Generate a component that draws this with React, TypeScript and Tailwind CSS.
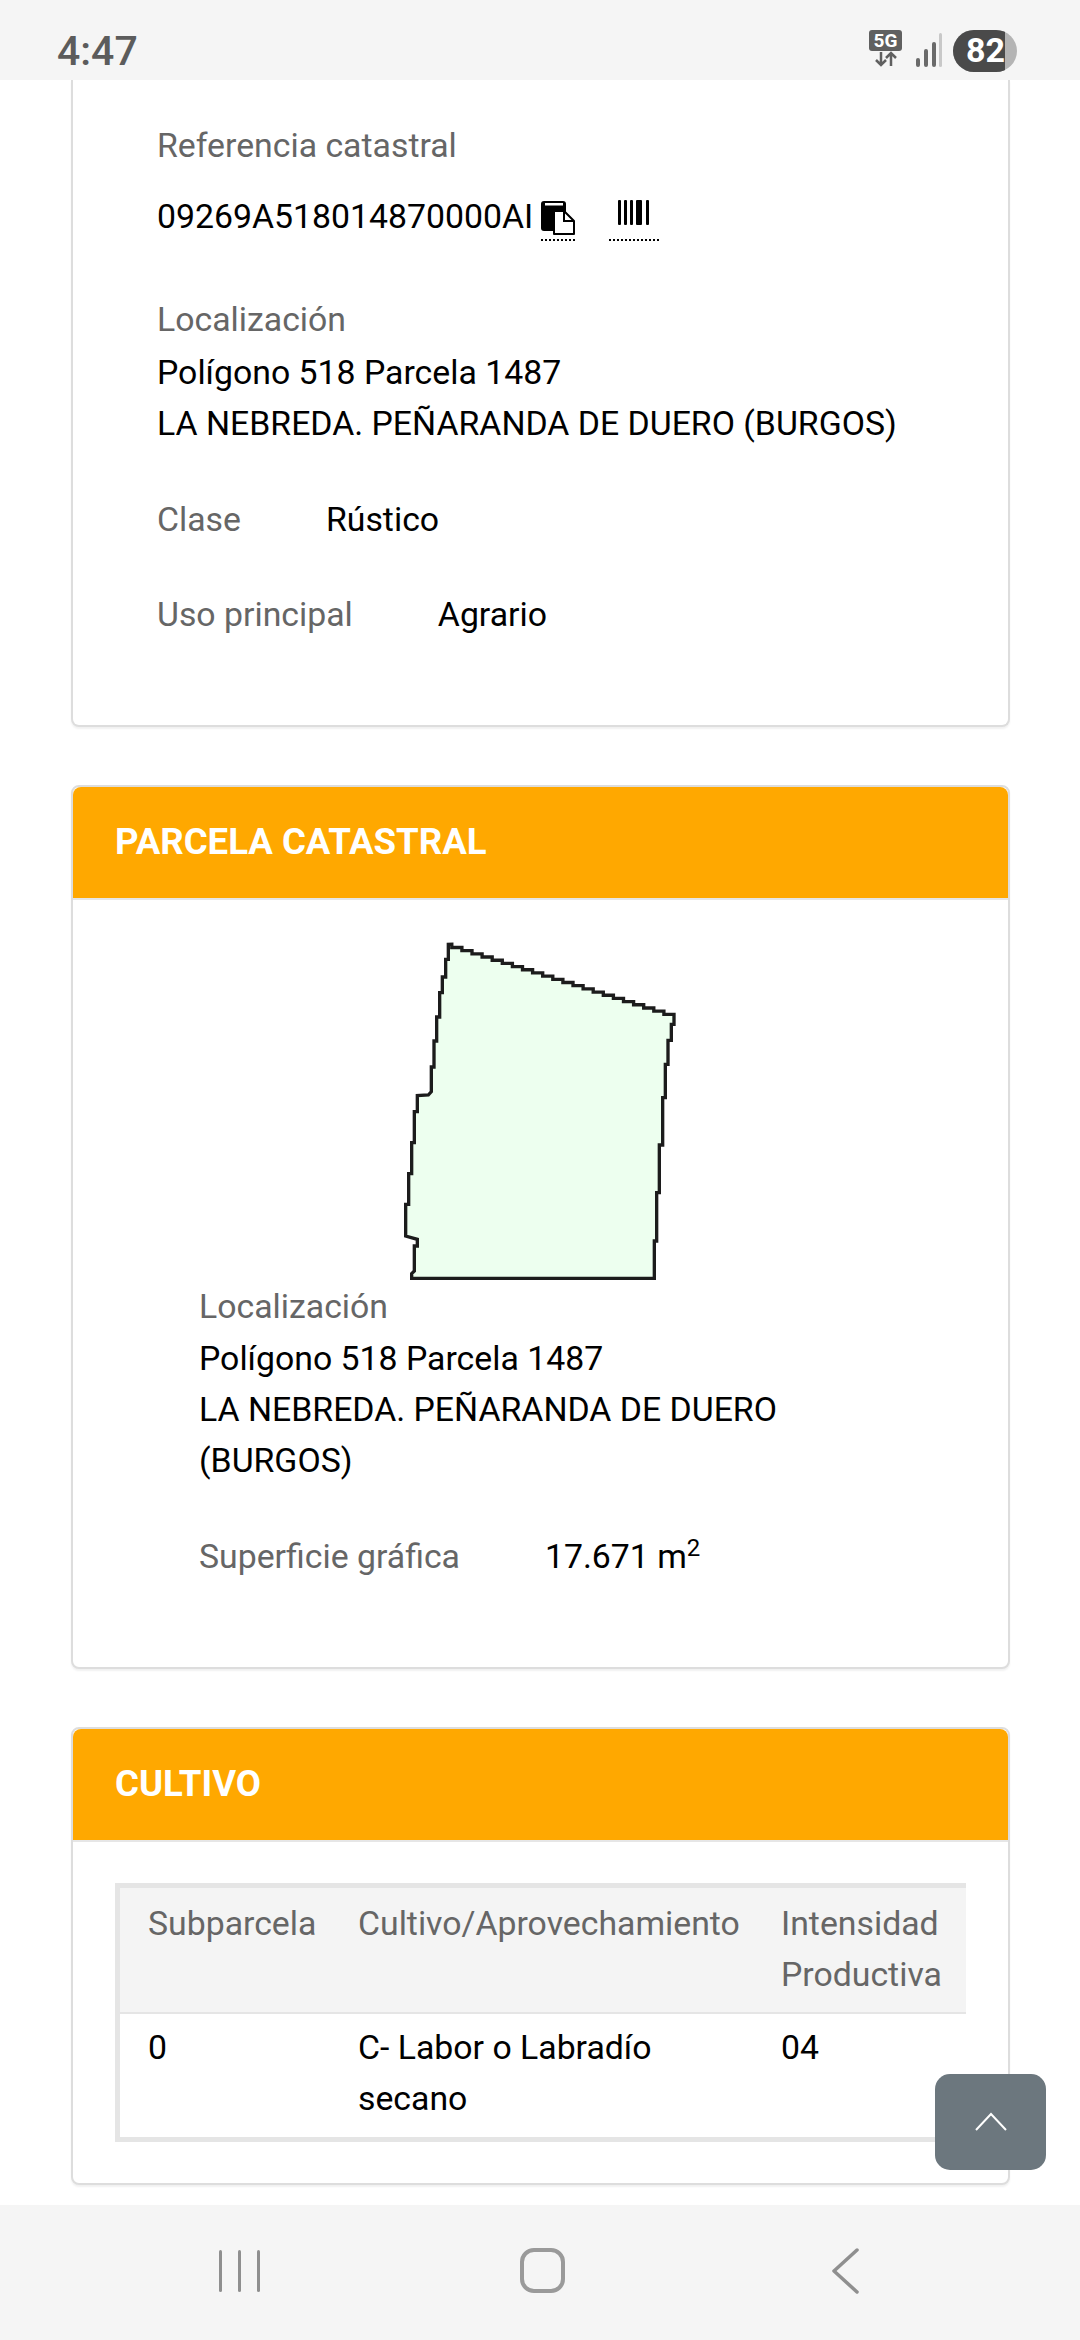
import type { ReactNode } from 'react';

const leftAndBottom =
  '205,70 205,115 197,115 197,168 187,168 187,215 179,215 179,288 170,288 170,360 162,360 162,438 154,438 154,512 145,522 112,524 112,572 103,572 103,665 95,665 95,758 86,758 86,850 77,850 77,945 112,955 112,975 103,975 103,1050 95,1058 95,1072 823,1072 823,960 830,960 830,815 838,815 838,672 848,672 848,530 856,530 856,430 864,430 864,358 874,358 874,310 882,310 882,280';

// top edge of the parcel is a staircase from the right corner back to the start
const topEdge = Array.from({ length: 22 }, (_, i) => {
  const x = 882 - (i + 1) * 30.3;
  const y = 280 - i * 9.55;
  return `${x},${y} ${x},${y - 9.55}`;
}).join(' ');

function CardHeader({ title }: { title: string }) {
  return (
    <div className="flex h-[113px] items-center rounded-t-lg border-b-2 border-[#e6e6e6] bg-[#ffa800] pb-[3px] pl-[42px] text-[36.6px] font-bold text-white">
      {title}
    </div>
  );
}

function Card({ children, className }: { children: ReactNode; className: string }) {
  return (
    <div className={`ml-[71px] w-[939px] border-2 border-[#dddddd] bg-white shadow-[0_2px_2px_rgba(0,0,0,0.06)] ${className}`}>
      {children}
    </div>
  );
}

function Row({ label, value, className }: { label: string; value: ReactNode; className: string }) {
  return (
    <div className={`flex gap-[85px] ${className}`}>
      <span className="text-[#666666]">{label}</span>
      <span className="text-black">{value}</span>
    </div>
  );
}

function CopyIcon() {
  return (
    <svg width="34" height="34" viewBox="0 0 34 34">
      <path d="M3 0h19a3 3 0 0 1 3 3v27H3a3 3 0 0 1-3-3V3a3 3 0 0 1 3-3z" fill="#000" />
      <rect x="4" y="2" width="18" height="2.5" fill="#fff" />
      <path d="M13 33V10h10l10 10v13z" fill="#fff" stroke="#000" strokeWidth="2" strokeLinejoin="round" />
      <path d="M23 10v10h10" fill="none" stroke="#000" strokeWidth="2" />
    </svg>
  );
}

function BarcodeIcon() {
  return (
    <svg width="34" height="26" viewBox="0 0 34 26" fill="#000">
      <rect x="1" y="0" width="3" height="25" rx="1" />
      <rect x="7" y="0" width="3" height="25" rx="1" />
      <rect x="13" y="0" width="3" height="25" rx="1" />
      <rect x="19" y="0" width="6" height="25" rx="1" />
      <rect x="29" y="0" width="3" height="25" rx="1" />
    </svg>
  );
}

function StatusBar() {
  return (
    <div className="flex h-[80px] shrink-0 items-start justify-between bg-[#f5f5f5] pr-[63px] pl-[57px]">
      <span className="mt-[27px] text-[41px] leading-[48px] font-medium text-[#5c5c5c]">4:47</span>
      <div className="mt-[30px] flex items-start">
        <div className="flex w-[33px] flex-col items-center">
          <span className="flex h-[21px] w-[33px] items-center justify-center rounded-[3px] bg-[#606060] text-[19px] leading-none font-bold text-white">
            5G
          </span>
          <svg width="26" height="16" viewBox="0 0 26 16" fill="none" stroke="#606060" strokeWidth="2.5">
            <path d="M8 1v13M3 9l5 5 5-5" />
            <path d="M18 15V2M13 7l5-5 5 5" />
          </svg>
        </div>
        <svg className="mt-[2px] ml-[13px]" width="27" height="36" viewBox="0 0 27 36">
          <rect x="1" y="26" width="4" height="9" rx="2" fill="#6a6a6a" />
          <rect x="9" y="17" width="4" height="18" rx="2" fill="#6a6a6a" />
          <rect x="17" y="10" width="4" height="25" rx="2" fill="#6a6a6a" />
          <rect x="24" y="1" width="3" height="34" rx="1.5" fill="#c8c8c8" />
        </svg>
        <div className="ml-[11px] flex h-[42px] w-[64px] overflow-hidden rounded-full bg-[#b4b4b4]">
          <span className="flex w-[52px] items-center justify-end bg-[#4a4a4a] pb-[2px] text-[34px] leading-none font-bold text-white">
            82
          </span>
        </div>
      </div>
    </div>
  );
}

function NavBar() {
  return (
    <div className="flex h-[135px] shrink-0 items-start bg-[#f5f5f5] pt-[43px] pl-[219px]">
      <div className="mt-[2px] flex h-[42px] w-[41px] justify-between">
        <span className="w-[3px] rounded-full bg-[#8f8f8f]" />
        <span className="w-[3px] rounded-full bg-[#8f8f8f]" />
        <span className="w-[3px] rounded-full bg-[#8f8f8f]" />
      </div>
      <div className="ml-[260px] h-[45px] w-[45px] rounded-[14px] border-[4px] border-[#9a9a9a]" />
      <svg className="ml-[266px]" width="28" height="46" viewBox="0 0 28 46" fill="none" stroke="#8f8f8f" strokeWidth="3.5" strokeLinecap="round" strokeLinejoin="round">
        <path d="M26 2 3 23l23 21" />
      </svg>
    </div>
  );
}

export default function App() {
  return (
    <div className="relative flex h-[2340px] w-[1080px] flex-col overflow-hidden bg-white font-['Roboto',sans-serif] text-[33.8px] leading-[51px]">
      <StatusBar />
      <div className="min-h-0 flex-1 overflow-hidden">
        <Card className="h-[647px] rounded-b-lg border-t-0 pt-[40px] pl-[84px]">
          <div className="text-[#666666]">Referencia catastral</div>
          <div className="mt-[20px] flex items-start text-black">
            <span>09269A518014870000AI</span>
            <span className="mt-[10px] ml-[8px] border-b-2 border-dotted border-black pb-[4px]">
              <CopyIcon />
            </span>
            <span className="mt-[9px] ml-[34px] border-b-2 border-dotted border-black px-[8px] pb-[13px]">
              <BarcodeIcon />
            </span>
          </div>
          <div className="mt-[52px] text-[#666666]">Localización</div>
          <div className="mt-[2px] text-black">Polígono 518 Parcela 1487</div>
          <div className="text-black">LA NEBREDA. PEÑARANDA DE DUERO (BURGOS)</div>
          <Row label="Clase" value="Rústico" className="mt-[45px]" />
          <Row label="Uso principal" value="Agrario" className="mt-[44px]" />
        </Card>

        <Card className="mt-[58px] h-[884px] rounded-lg">
          <CardHeader title="PARCELA CATASTRAL" />
          <svg className="mt-[21px] ml-[307px]" width="320" height="360" viewBox="0 0 960 1080">
            <polygon
              points={`${leftAndBottom} ${topEdge}`}
              fill="#edffef"
              stroke="#1c1c1c"
              strokeWidth="10"
            />
          </svg>
          <div className="w-[760px] pl-[126px]">
            <div className="text-[#666666]">Localización</div>
            <div className="mt-[1px] text-black">Polígono 518 Parcela 1487</div>
            <div className="text-black">LA NEBREDA. PEÑARANDA DE DUERO (BURGOS)</div>
            <Row
              label="Superficie gráfica"
              value={
                <>
                  17.671 m<sup className="text-[24px]">2</sup>
                </>
              }
              className="mt-[45px]"
            />
          </div>
        </Card>

        <Card className="mt-[58px] h-[458px] rounded-lg">
          <CardHeader title="CULTIVO" />
          <div className="mt-[41px] ml-[42px] w-[851px] overflow-hidden border-[5px] border-r-0 border-[#e5e5e5]">
            <table className="w-[900px] table-fixed border-collapse text-left">
              <colgroup>
                <col className="w-[238px]" />
                <col className="w-[423px]" />
                <col />
              </colgroup>
              <thead>
                <tr className="border-b-2 border-[#e5e5e5] bg-[#f4f4f4] align-top text-[#666666]">
                  <th className="pt-[10px] pb-[12px] pl-[28px] font-normal">Subparcela</th>
                  <th className="pt-[10px] pb-[12px] pl-0 font-normal">Cultivo/Aprovechamiento</th>
                  <th className="pt-[10px] pb-[12px] pl-0 font-normal">
                    Intensidad
                    <br />
                    Productiva
                  </th>
                </tr>
              </thead>
              <tbody>
                <tr className="align-top text-black">
                  <td className="pt-[8px] pb-[13px] pl-[28px]">0</td>
                  <td className="pt-[8px] pb-[13px]">
                    C- Labor o Labradío
                    <br />
                    secano
                  </td>
                  <td className="pt-[8px] pb-[13px]">04</td>
                </tr>
              </tbody>
            </table>
          </div>
        </Card>
      </div>
      <NavBar />
      <button
        type="button"
        className="absolute top-[2074px] left-[935px] flex h-[96px] w-[111px] items-center justify-center rounded-[15px] bg-[#6c777e]"
      >
        <svg width="34" height="20" viewBox="0 0 34 20" fill="none" stroke="#fff" strokeWidth="2">
          <path d="M2 18 17 2l15 16" />
        </svg>
      </button>
    </div>
  );
}
